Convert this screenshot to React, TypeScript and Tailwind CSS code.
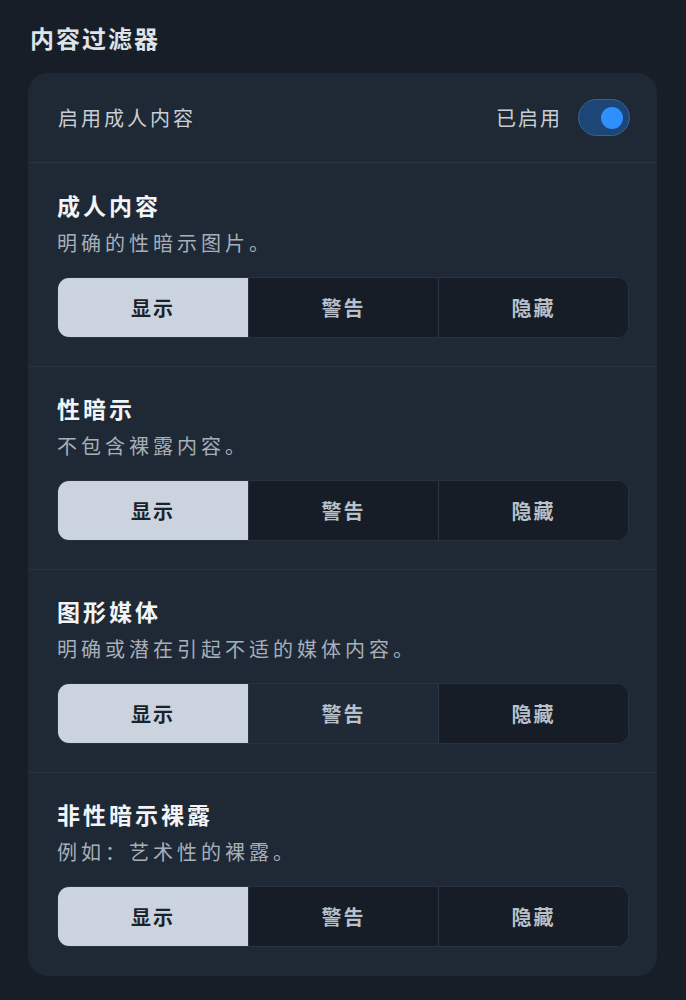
import React from "react";

const font = { fontFamily: '"Noto Sans CJK SC", "Noto Sans", sans-serif' };

type Sec = { title: string; desc: string; hover?: number };

const sections: Sec[] = [
  { title: "成人内容", desc: "明确的性暗示图片。" },
  { title: "性暗示", desc: "不包含裸露内容。" },
  { title: "图形媒体", desc: "明确或潜在引起不适的媒体内容。", hover: 1 },
  { title: "非性暗示裸露", desc: "例如：艺术性的裸露。" },
];

function Segmented({ hover }: { hover?: number }) {
  const labels = ["显示", "警告", "隐藏"];
  return (
    <div className="grid grid-cols-3 h-[61px] rounded-[12px] overflow-hidden border border-[#27323e] bg-[#161d27]">
      {labels.map((l, i) => (
        <div
          key={l}
          className={
            "flex items-center justify-center text-[20px] font-bold tracking-[2px] " +
            (i > 0 ? "border-l border-[#2b3642] " : "") +
            (i === 0
              ? "bg-[#cbd4de] text-[#1a222b]"
              : hover === i
              ? "bg-[#1f2a36] text-[#b8c1cb]"
              : "bg-[#161d27] text-[#b8c1cb]")
          }
        >
          {l}
        </div>
      ))}
    </div>
  );
}

export default function App() {
  return (
    <div className="min-h-screen bg-[#171e27] pt-[23px] pb-[23px]" style={font}>
      <h1 className="pl-[30px] text-[24px] leading-[30px] font-bold tracking-[2px] text-[#dfe3e8] mb-[20px]">
        内容过滤器
      </h1>
      <div className="ml-[28px] w-[629px] rounded-[20px] bg-[#1e2935]">
        <div className="h-[90px] flex items-center justify-between pl-[30px] pr-[27px] border-b border-[#29343f]">
          <span className="text-[20px] tracking-[3px] text-[#c9ced4]">启用成人内容</span>
          <div className="flex items-center gap-[16px]">
            <span className="text-[20px] tracking-[2px] text-[#c9ced4]">已启用</span>
            <div className="w-[52px] h-[37px] rounded-full bg-[#1c4675] border border-[#3a6190] flex items-center justify-end pr-[6px]">
              <div className="w-[22px] h-[22px] rounded-full bg-[#2f8fff]" />
            </div>
          </div>
        </div>
        {sections.map((s, idx) => (
          <div
            key={s.title}
            className={
              "pl-[29px] pr-[28px] " +
              (idx === 0 ? "pt-[28px] " : "pt-[27px] ") +
              (idx < sections.length - 1 ? "pb-[28px] border-b border-[#29343f]" : "pb-[29px]")
            }
          >
            <div className="text-[23px] leading-[28px] font-bold tracking-[3px] text-[#f2f4f6]">{s.title}</div>
            <div className="mt-[10px] text-[20px] leading-[28px] tracking-[4px] text-[#a7afb9]">{s.desc}</div>
            <div className="mt-[20px]">
              <Segmented hover={s.hover} />
            </div>
          </div>
        ))}
      </div>
    </div>
  );
}
